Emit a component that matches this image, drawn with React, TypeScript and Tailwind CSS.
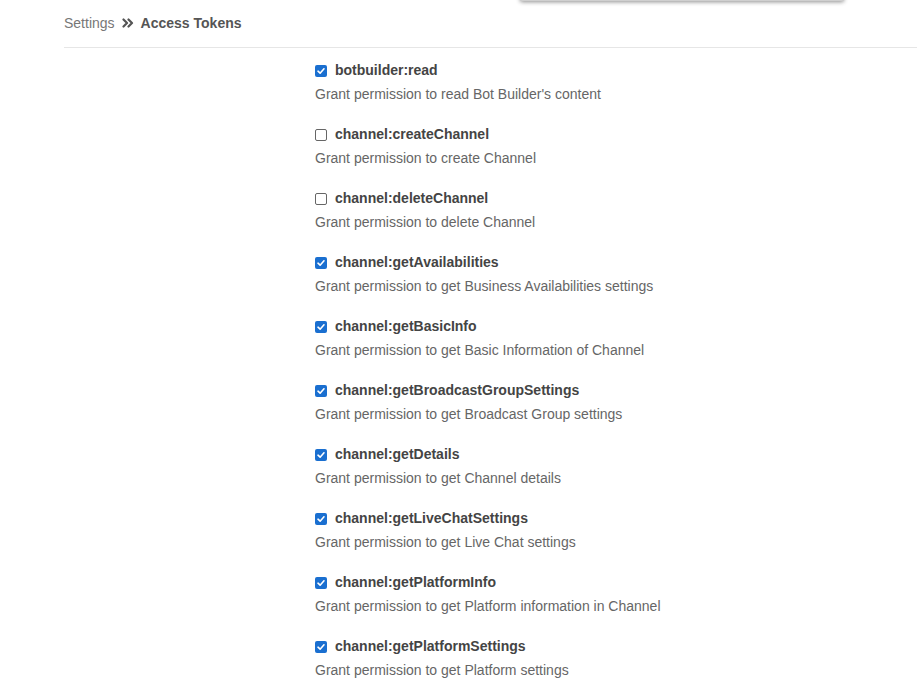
import React from "react";

type Scope = {
  name: string;
  desc: string;
  checked: boolean;
};

const scopes: Scope[] = [
  { name: "botbuilder:read", desc: "Grant permission to read Bot Builder's content", checked: true },
  { name: "channel:createChannel", desc: "Grant permission to create Channel", checked: false },
  { name: "channel:deleteChannel", desc: "Grant permission to delete Channel", checked: false },
  { name: "channel:getAvailabilities", desc: "Grant permission to get Business Availabilities settings", checked: true },
  { name: "channel:getBasicInfo", desc: "Grant permission to get Basic Information of Channel", checked: true },
  { name: "channel:getBroadcastGroupSettings", desc: "Grant permission to get Broadcast Group settings", checked: true },
  { name: "channel:getDetails", desc: "Grant permission to get Channel details", checked: true },
  { name: "channel:getLiveChatSettings", desc: "Grant permission to get Live Chat settings", checked: true },
  { name: "channel:getPlatformInfo", desc: "Grant permission to get Platform information in Channel", checked: true },
  { name: "channel:getPlatformSettings", desc: "Grant permission to get Platform settings", checked: true },
];

function Checkbox({ checked }: { checked: boolean }) {
  if (checked) {
    return (
      <span className="flex h-[12px] w-[12px] items-center justify-center rounded-[2px] bg-[#1a6fd0]">
        <svg width="10" height="10" viewBox="0 0 10 10" fill="none">
          <path d="M2 5.2L4.1 7.2L8 2.8" stroke="white" strokeWidth="1.6" strokeLinecap="round" strokeLinejoin="round" />
        </svg>
      </span>
    );
  }
  return <span className="block h-[12px] w-[12px] rounded-[2px] border border-[#666] bg-white" />;
}

export default function App() {
  return (
    <div className="relative h-[687px] w-[917px] overflow-hidden bg-white font-['Liberation_Sans',Arial,sans-serif]">
      <div className="absolute left-[520px] top-[-12px] h-[13px] w-[324px] rounded-b-[2px] bg-[#cfcfcf] shadow-[0_1px_4px_rgba(0,0,0,0.45)]" />

      <div className="ml-16 flex h-[48px] items-center border-b border-[#e6e6e6] pb-[1px] text-[14px]">
        <span className="text-[#777]">Settings</span>
        <span className="mx-[7px] flex items-center text-[#555]">
          <svg width="12" height="10" viewBox="0 0 12 10" fill="none">
            <path d="M1.5 1.5L5 5L1.5 8.5M6.5 1.5L10 5L6.5 8.5" stroke="#555" strokeWidth="2.2" strokeLinecap="round" strokeLinejoin="round" />
          </svg>
        </span>
        <span className="font-bold text-[#555]">Access Tokens</span>
      </div>

      <div className="ml-[315px] mt-[10px] flex flex-col gap-4">
        {scopes.map((s) => (
          <div key={s.name} className="flex flex-col">
            <div className="flex h-6 items-center gap-2 pt-[1px]">
              <Checkbox checked={s.checked} />
              <span className="text-[14px] font-bold text-[#444]">{s.name}</span>
            </div>
            <div className="flex h-6 items-center text-[14px] text-[#666]">{s.desc}</div>
          </div>
        ))}
      </div>
    </div>
  );
}
